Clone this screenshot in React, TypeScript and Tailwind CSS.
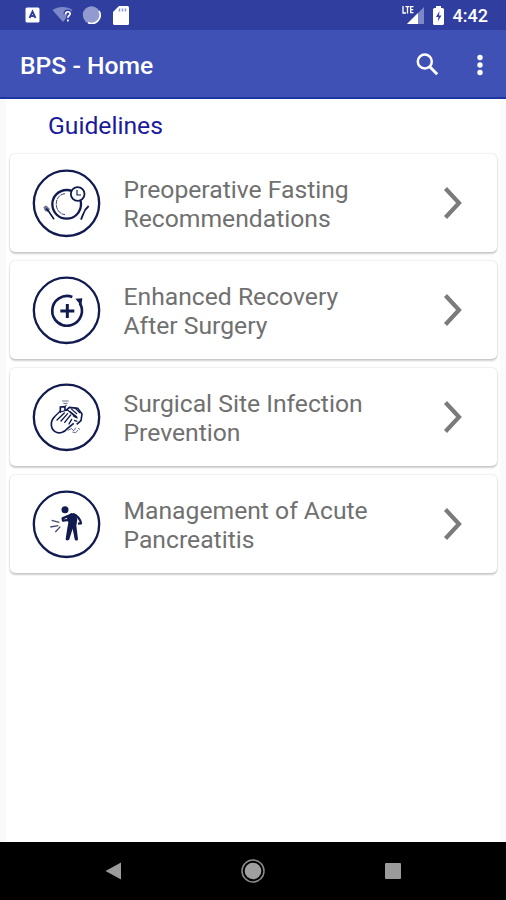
import type { ReactNode } from "react";

function StatusBar() {
  return (
    <div className="flex h-[30px] items-center justify-between bg-[#303f9f] pl-[25px] pr-[18px] text-white">
      <div className="flex items-center">
        <svg className="h-4 w-[15px]" viewBox="0 0 15 16">
          <rect x="0.5" y="0.5" width="14" height="15" rx="1.5" fill="#fff" />
          <path d="M4.5 11 7.5 4.5 10.5 11M5.5 9h4" fill="none" stroke="#303f9f" strokeWidth="1.8" />
        </svg>
        <svg className="ml-3 h-[18px] w-[21px]" viewBox="0 0 21 18">
          <path d="M0.5 4C6 0 15 0 20.5 4L11 16Z" fill="#7d88c8" />
          <path d="M13.5 8.5c0-4 5-3.6 4.6-.5-.2 1.5-2.2 1.8-2.2 3.7" fill="none" stroke="#303f9f" strokeWidth="4" />
          <path d="M13.5 8.5c0-3.7 5-3.5 4.6-.5-.2 1.5-2.2 1.8-2.2 3.7M15.9 13.5v2" fill="none" stroke="#fff" strokeWidth="1.7" />
        </svg>
        <svg className="ml-[9px] h-[18px] w-[19px]" viewBox="0 0 19 18">
          <circle cx="9.5" cy="9" r="8.7" fill="#929bd0" />
          <path d="M17 5a8.3 8.3 0 0 1-11 11.5" fill="none" stroke="#fff" strokeWidth="1.6" />
        </svg>
        <svg className="ml-3 h-[19px] w-4" viewBox="0 0 16 19">
          <path d="M6 0h8.5Q16 0 16 1.5v16Q16 19 14.5 19h-13Q0 19 0 17.5V6Z" fill="#fff" />
          <path d="M6.5 2.5v3M9.5 2.5v3M12.5 2.5v3" stroke="#8d96cd" strokeWidth="1.5" />
        </svg>
      </div>
      <div className="flex items-center">
        <svg className="h-[20px] w-[22px]" viewBox="0 0 22 20">
          <path d="M22 2v17H5Z" fill="#7d88c8" />
          <path d="M16 8v11H5Z" fill="#fff" />
          <path d="M1 1v7h3M3.5 1.7h4M5.5 1.7V8.5M11.5 1.7H8.7v6h2.8M8.7 4.7h2.5" fill="none" stroke="#fff" strokeWidth="1.3" />
        </svg>
        <svg className="ml-[9px] h-[19px] w-[11px]" viewBox="0 0 11 19">
          <path d="M3 0h5v2h1.5Q11 2 11 3.5v14Q11 19 9.5 19h-8Q0 19 0 17.5v-14Q0 2 1.5 2H3Z" fill="#fff" />
          <path d="M6.5 5 3 11h2.5L4.8 15.5 8.5 9.5H6Z" fill="#303f9f" />
        </svg>
        <span className="ml-[9px] pt-px text-[18px] leading-none font-medium">4:42</span>
      </div>
    </div>
  );
}

function AppBar() {
  return (
    <header className="flex h-[69px] items-center justify-between border-b-2 border-[#1c35a3] bg-[#3f51b5] pl-5 pr-[23px] text-white">
      <h1 className="pt-[5px] text-[24.7px] leading-none font-medium">BPS - Home</h1>
      <div className="flex items-center pt-0.5">
        <svg className="mr-[38px] h-[23px] w-[23px]" viewBox="0 0 23 23">
          <circle cx="8.8" cy="8.5" r="7" fill="none" stroke="#fff" strokeWidth="2.5" />
          <path d="m13.5 13.5 7.7 7.7" stroke="#fff" strokeWidth="3" />
        </svg>
        <svg className="h-[22px] w-[6px]" viewBox="0 0 6 22" fill="#fff">
          <circle cx="3" cy="3.5" r="2.7" />
          <circle cx="3" cy="11" r="2.7" />
          <circle cx="3" cy="18.5" r="2.7" />
        </svg>
      </div>
    </header>
  );
}

function FastingIcon() {
  return (
    <>
      <circle cx="107" cy="109" r="43" strokeWidth="7" />
      <path d="M102 77C67 80 67 136 102 140" strokeWidth="2.5" strokeDasharray="14 2" />
      <circle cx="140" cy="78" r="20.5" fill="#fff" strokeWidth="5.5" />
      <path d="M138 66v15h12" strokeWidth="3.5" />
      <path d="m45 122 6 5 18 27" strokeWidth="5" />
      <path d="m38 117 8-4 10 10-5 8-9-3Z" fill="#111b4f" fillOpacity="0.6" strokeWidth="1.5" strokeOpacity="0.5" />
      <path d="M173 114c-7 6-15 19-17 26l-6 15" strokeWidth="5.5" />
    </>
  );
}

function RecoveryIcon() {
  return (
    <>
      <path d="M124 66A44.500 44.500 0 1 0 146 84" strokeWidth="8" />
      <path d="M133 71 154 70 151 92Z" fill="#111b4f" stroke="none" />
      <path d="M109 87v42M88 108h42" strokeWidth="9" />
    </>
  );
}

function HandsIcon() {
  return (
    <>
      <path d="M72 103C58 115 57 138 71 148C84 157 101 151 110 139L128 124" strokeWidth="5" />
      <path d="M72 103 88 87M78 114l22-21M90 117l20-22M101 121l18-22M114 126l8-14" strokeWidth="4" strokeLinecap="round" />
      <path d="M88 92V75l14-1v12M105 85l10-9 25 3 13 17-3 20-13 11" strokeWidth="5" />
      <path d="m120 80 18 16M130 76l17 17M116 88l22 17M126 101l14 8M129 115l10 3" strokeWidth="3.5" />
      <path d="M88 90l22-6 24 22" strokeWidth="3.5" />
      <path d="M93 57h20M97 64h13M102 70h6M110 145l12-5 7 7M124 150l10 2 7-8M133 137l-2 8M141 139l6 3" strokeWidth="3" strokeOpacity="0.65" />
    </>
  );
}

function PancreatitisIcon() {
  return (
    <>
      <circle cx="102" cy="62.5" r="10.500" fill="#111b4f" stroke="none" />
      <path d="M106 80 121 72 134 75 139 90 136 110 141 151C141 156 132 156 131 151L125 119 115 151C113 156 103 155 104 150L109 117 112 101Z" fill="#111b4f" stroke="none" />
      <path d="M109 82 95 88l1 7 24-3M126 75c11 4 21 14 24 28l-9 1" strokeWidth="7" strokeLinejoin="round" />
      <path d="m62 94 23 6M58 114l24-4M73 129l15-16" strokeWidth="4" strokeOpacity="0.8" />
    </>
  );
}

const guidelines: { lines: [string, string]; icon: ReactNode }[] = [
  { lines: ["Preoperative Fasting", "Recommendations"], icon: <FastingIcon /> },
  { lines: ["Enhanced Recovery", "After Surgery"], icon: <RecoveryIcon /> },
  { lines: ["Surgical Site Infection", "Prevention"], icon: <HandsIcon /> },
  { lines: ["Management of Acute", "Pancreatitis"], icon: <PancreatitisIcon /> },
];

function GuidelineCard({ lines, icon }: { lines: [string, string]; icon: ReactNode }) {
  return (
    <button className="flex h-[98px] w-full items-center rounded-[5px] bg-white pl-[21px] pr-[34px] text-left shadow-[0_0_2px_rgba(0,0,0,0.2),0_2px_2px_rgba(0,0,0,0.18)]">
      <svg className="h-[71px] w-[71px]" viewBox="0 0 213 213" fill="none" stroke="#111b4f">
        <circle cx="106.5" cy="106" r="98" strokeWidth="7" />
        {icon}
      </svg>
      <span className="ml-[21.5px] grow pt-px text-[24.7px] leading-[29px] text-[#707070]">
        {lines[0]}
        <br />
        {lines[1]}
      </span>
      <svg className="h-[34px] w-5" viewBox="0 0 20 34">
        <path d="M2.5 2.5 16 17 2.5 31.500" fill="none" stroke="#7b7b7b" strokeWidth="4.2" />
      </svg>
    </button>
  );
}

function NavigationBar() {
  return (
    <nav className="flex h-[58px] items-center justify-between bg-black pl-[105px] pr-[105px]">
      <svg className="h-[18px] w-4" viewBox="0 0 16 18">
        <path d="M16 0.5v17L0.5 9Z" fill="#9b9b9b" />
      </svg>
      <svg className="h-6 w-6" viewBox="0 0 24 24">
        <circle cx="12" cy="12" r="11" fill="none" stroke="#8b8b8b" strokeWidth="1.5" />
        <circle cx="12" cy="12" r="8.3" fill="#a0a0a0" />
      </svg>
      <div className="h-4 w-4 rounded-[1px] bg-[#9b9b9b]" />
    </nav>
  );
}

export default function App() {
  return (
    <div className="flex h-[900px] w-[506px] flex-col overflow-hidden bg-white font-['Roboto',sans-serif]">
      <StatusBar />
      <AppBar />
      <main className="grow border-x-[6px] border-[#fafafa] pl-1 pr-[3px]">
        <h2 className="pl-[38px] pt-[12px] text-[24.7px] leading-[30px] text-[#1a1a9c]">Guidelines</h2>
        <div className="flex flex-col gap-[9px] pt-[13px]">
          {guidelines.map((item) => (
            <GuidelineCard key={item.lines[0]} {...item} />
          ))}
        </div>
      </main>
      <NavigationBar />
    </div>
  );
}
